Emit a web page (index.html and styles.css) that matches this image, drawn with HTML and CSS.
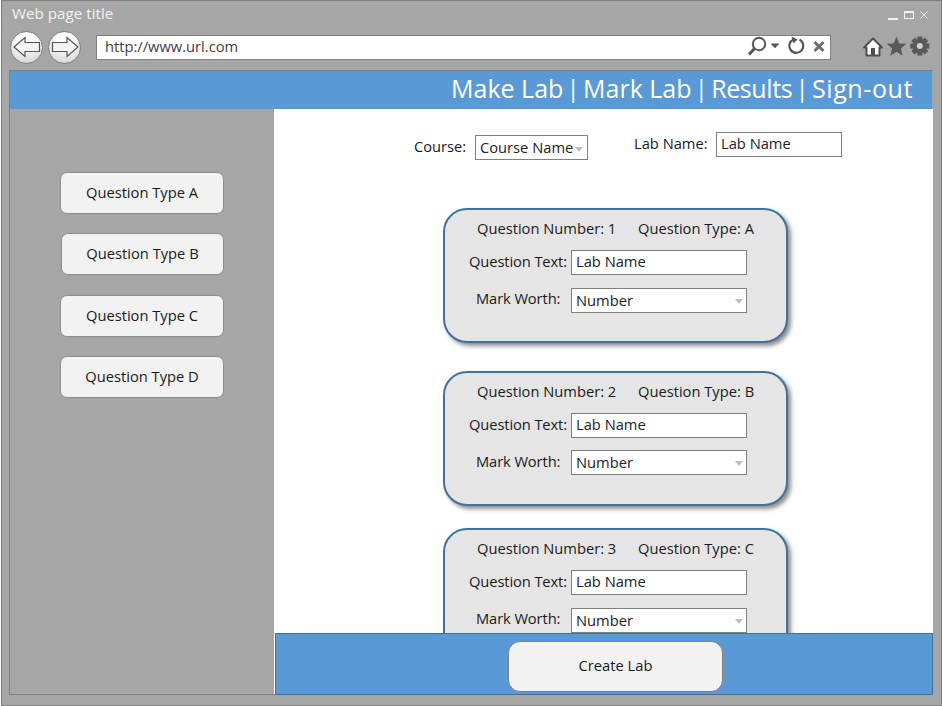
FILE: index.html
```html
<!DOCTYPE html>
<html lang="en">
<head>
<meta charset="utf-8">
<title>Web page title</title>
<link rel="stylesheet" href="styles.css">
</head>
<body>
<div class="window">
  <div class="titlebar">
    <span class="page-title">Web page title</span>
    <div class="win-controls">
      <svg class="win-icons" width="42" height="12" viewBox="0 0 42 12">
        <rect x="0" y="8" width="10" height="2" fill="#f2f2f2"/>
        <rect x="16.5" y="1.5" width="9" height="7" fill="none" stroke="#f2f2f2" stroke-width="1"/>
        <rect x="16" y="1" width="10" height="2" fill="#f2f2f2"/>
        <path d="M32.5 1.5 L39.5 8.5 M39.5 1.5 L32.5 8.5" stroke="#e6e6e6" stroke-width="1" fill="none"/>
      </svg>
    </div>
  </div>
  <div class="toolbar">
    <button class="nav-btn" aria-label="Back">
      <svg width="30" height="22" viewBox="0 0 30 22"><path d="M2 11 L13 1.5 V6.5 H27.5 V15.5 H13 V20.5 Z" fill="#f4f4f4" stroke="#555" stroke-width="1.2"/></svg>
    </button>
    <button class="nav-btn nav-next" aria-label="Forward">
      <svg width="30" height="22" viewBox="0 0 30 22"><path d="M28 11 L17 1.5 V6.5 H2.5 V15.5 H17 V20.5 Z" fill="#f4f4f4" stroke="#555" stroke-width="1.2"/></svg>
    </button>
    <div class="urlbar">
      <span class="url">http://www.url.com</span>
      <svg class="url-icons" width="84" height="22" viewBox="0 0 84 22">
        <circle cx="15" cy="8" r="6.2" fill="none" stroke="#555" stroke-width="2"/>
        <path d="M10.5 12.5 L5 18.5" stroke="#555" stroke-width="3" fill="none"/>
        <path d="M26.5 7.5 H35.5 L31 12.2 Z" fill="#555"/>
        <path d="M55.5 3.6 A7 7 0 1 1 49.5 3.4" fill="none" stroke="#555" stroke-width="2.2"/>
        <path d="M47.5 0.5 L53.5 3.5 L49.5 7.5 Z" fill="#555"/>
        <path d="M70.5 6 L79.5 15 M79.5 6 L70.5 15" stroke="#6e6e6e" stroke-width="3" fill="none"/>
      </svg>
    </div>
    <svg class="tools" width="70" height="22" viewBox="0 0 70 22">
      <path d="M2 11.5 L11 2.5 L20 11.5 L17.5 11.5 V19.5 H4.5 V11.5 Z" fill="#fff" stroke="#505050" stroke-width="2" stroke-linejoin="round"/>
      <rect x="9" y="12" width="4" height="7" fill="#505050"/>
      <path d="M34.5 0.5 L37.3 7.4 L44.3 7.8 L38.9 12.4 L40.7 19.8 L34.5 15.7 L28.3 19.8 L30.1 12.4 L24.7 7.8 L31.7 7.4 Z" fill="#595959"/>
      <g fill="#595959">
        <circle cx="57.8" cy="10" r="7"/>
        <rect x="55.3" y="0.5" width="5" height="19"/>
        <rect x="48.3" y="7.5" width="19" height="5"/>
        <rect x="55.3" y="0.5" width="5" height="19" transform="rotate(45 57.8 10)"/>
        <rect x="55.3" y="0.5" width="5" height="19" transform="rotate(-45 57.8 10)"/>
      </g>
      <circle cx="57.8" cy="10" r="3" fill="#d0d0d0"/>
    </svg>
  </div>
  <div class="frame">
    <nav class="topnav">
      <span>Make Lab</span><span class="sep">|</span><span>Mark Lab</span><span class="sep">|</span><span class="nav-results">Results</span><span class="sep">|</span><span class="nav-sign">Sign-out</span>
    </nav>
    <div class="body-row">
      <aside class="sidebar">
        <button class="type-btn btn-a">Question Type A</button>
        <button class="type-btn btn-b">Question Type B</button>
        <button class="type-btn btn-c">Question Type C</button>
        <button class="type-btn btn-d">Question Type D</button>
      </aside>
      <main class="main">
        <div class="content">
          <div class="meta">
            <div class="field field-course">
              <span class="label">Course:</span>
              <div class="box select select-course"><span>Course Name</span><i class="caret"></i></div>
            </div>
            <div class="field field-lab">
              <span class="label">Lab Name:</span>
              <div class="box input-lab">Lab Name</div>
            </div>
          </div>
          <section class="card">
            <div class="card-head"><span>Question Number: 1</span><span>Question Type: A</span></div>
            <div class="card-row row-text"><span class="row-label">Question Text:</span><div class="box wide">Lab Name</div></div>
            <div class="card-row row-mark"><span class="row-label mark">Mark Worth:</span><div class="box wide select"><span>Number</span><i class="caret"></i></div></div>
          </section>
          <section class="card card-2">
            <div class="card-head"><span>Question Number: 2</span><span>Question Type: B</span></div>
            <div class="card-row row-text"><span class="row-label">Question Text:</span><div class="box wide">Lab Name</div></div>
            <div class="card-row row-mark tight"><span class="row-label mark">Mark Worth:</span><div class="box wide select"><span>Number</span><i class="caret"></i></div></div>
          </section>
          <section class="card card-3">
            <div class="card-head"><span>Question Number: 3</span><span>Question Type: C</span></div>
            <div class="card-row row-text"><span class="row-label">Question Text:</span><div class="box wide">Lab Name</div></div>
            <div class="card-row row-mark"><span class="row-label mark">Mark Worth:</span><div class="box wide select"><span>Number</span><i class="caret"></i></div></div>
          </section>
        </div>
        <footer class="footer"><button class="create-btn">Create Lab</button></footer>
      </main>
    </div>
  </div>
</div>
</body>
</html>
```
FILE: styles.css
```css
* { box-sizing: border-box; }
html, body { margin: 0; padding: 0; }
body { width: 942px; height: 706px; overflow: hidden; background: #fff; font-family: "Open Sans", "Noto Sans", sans-serif; font-size: 14.7px; color: #1a1a1a; }
.window { margin-left: 1px; width: 941px; height: 706px; background: #a6a6a6; border: 1px solid #808080; display: flex; flex-direction: column; }

.titlebar { height: 28px; display: flex; justify-content: space-between; align-items: center; padding: 0 11px 0 10px; flex: none; }
.page-title { color: #f2f2f2; font-size: 15.2px; line-height: 20px; margin-top: -5px; }
.win-icons { display: block; margin-top: 1px; }

.toolbar { height: 41px; display: flex; align-items: center; flex: none; padding: 0 0 5px 8px; }
.nav-btn { width: 33px; height: 33px; padding: 0; border-radius: 50%; border: 1px solid #808080; background: radial-gradient(circle at 50% 25%, #fff 25%, #d4d4d4 90%); display: flex; align-items: center; justify-content: center; flex: none; }
.nav-next { margin-left: 5px; }
.urlbar { margin-left: 15px; width: 735px; height: 25px; background: #fff; border: 1px solid #808080; display: flex; align-items: center; justify-content: space-between; padding: 0 2px 2px 8px; flex: none; }
.url { font-size: 14.7px; color: #404040; }
.url-icons { display: block; margin-bottom: -2px; }
.tools { margin-left: 31px; flex: none; }

.frame { margin: 0 7px; flex: none; height: 625px; width: 924px; border: 1px solid #808080; border-right: 0; display: flex; flex-direction: column; }
.topnav { height: 38px; background: #5999d5; color: #fff; font-size: 25px; line-height: 34px; display: flex; justify-content: flex-end; padding-right: 19px; margin-right: 1px; flex: none; white-space: nowrap; }
.sep { width: 22px; text-align: center; margin: 0 -1.17px; font-size: 24px; }
.nav-results { letter-spacing: -0.4px; }
.nav-sign { letter-spacing: 0.6px; }
.body-row { flex: 1; display: flex; min-height: 0; }
.sidebar { width: 264px; flex: none; background: #a6a6a6; display: flex; flex-direction: column; align-items: flex-start; padding: 63px 0 0 50px; }
.type-btn { width: 164px; height: 42px; border: 1px solid #8c8c8c; border-radius: 7px; background: #f2f2f2; font: inherit; line-height: 20px; color: #1a1a1a; padding: 0 0 2px; }
.btn-b { margin: 19px 0 0 1px; width: 163px; }
.btn-c { margin: 20px 0 0 0; padding-bottom: 3px; }
.btn-d { margin: 19px 0 0 0; }

.main { flex: 1; min-width: 0; display: flex; flex-direction: column; background: #fff; }
.content { flex: 1; min-height: 0; overflow: hidden; }
.meta { display: flex; align-items: flex-start; padding-left: 140px; }
.field { display: flex; align-items: center; }
.field-course { margin-top: 26px; }
.field-lab { margin: 23px 0 0 46px; }
.label { line-height: 25px; }
.field-course .label { width: 61px; margin-top: -2px; }
.field-lab .label { width: 82px; margin-top: -3px; }
.box { height: 25px; background: #fff; border: 1px solid #808080; display: flex; align-items: center; padding: 0 0 3px 4px; line-height: 20px; font-size: 14.7px; color: #222; flex: none; position: relative; }
.select { padding-bottom: 1px; }
.select-course { width: 113px; }
.input-lab { width: 126px; }
.caret { position: absolute; right: 4px; top: 11px; width: 0; height: 0; border-left: 4.5px solid transparent; border-right: 4.5px solid transparent; border-top: 5px solid #bdbdbd; }

.card { width: 345px; height: 135px; margin: 48px 0 0 169px; background: #e5e5e5; border: 2px solid #41719c; border-radius: 24px; box-shadow: 3px 3px 4px rgba(0,0,0,.45); padding-top: 8px; }
.card-2 { margin-top: 28px; }
.card-3 { margin-top: 22px; }
.card-head { display: flex; height: 20px; line-height: 20px; padding-left: 32px; gap: 20px; white-space: nowrap; }
.card-head span:first-child { width: 141px; }
.card-row { display: flex; align-items: center; padding-left: 126px; position: relative; }
.row-text { margin-top: 12px; }
.row-mark { margin-top: 13px; }
.tight { margin-top: 12px; }
.row-label { position: absolute; left: 24px; white-space: nowrap; top: 1px; line-height: 20px; letter-spacing: -0.1px; }
.row-label.mark { left: 31px; top: 0; }
.tight .row-label.mark { top: 1px; }
.wide { width: 176px; }
.wide.select .caret { right: 3px; top: 10px; }

.footer { flex: none; height: 62px; margin: 0 0 -1px 1px; background: #5999d5; border: 1px solid #41719c; display: flex; align-items: flex-start; padding: 7px 0 0 232px; }
.create-btn { width: 215px; height: 51px; border: 1px solid #808080; border-radius: 12px; background: #f2f2f2; font: inherit; line-height: 20px; color: #1a1a1a; padding: 0 0 4px; }
```
